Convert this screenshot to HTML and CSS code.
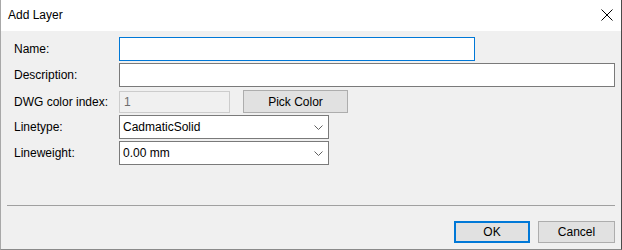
FILE: index.html
```html
<!DOCTYPE html>
<html lang="en">
<head>
    <meta charset="UTF-8">
    <title>Add Layer</title>
    <link rel="stylesheet" href="styles.css">
</head>
<body>

    <div class="window">
        <!-- Title bar -->
        <div class="titlebar">
            <span class="title">Add Layer</span>
            <svg class="close" width="12" height="12" viewBox="0 0 12 12">
                <path d="M0.5 0.5 L11.5 11.5 M11.5 0.5 L0.5 11.5" stroke="#000" stroke-width="1" fill="none"/>
            </svg>
        </div>

        <div class="content">
            <div class="form">
                <div class="row">
                    <label class="label">Name:</label>
                    <input class="field field-name focused" type="text">
                </div>
                <div class="row">
                    <label class="label">Description:</label>
                    <input class="field field-desc" type="text">
                </div>
                <div class="row row-color">
                    <label class="label">DWG color index:</label>
                    <input class="field field-index" type="text" value="1" disabled>
                    <button class="btn btn-pick">Pick Color</button>
                </div>
                <div class="row">
                    <label class="label">Linetype:</label>
                    <div class="combo">
                        <span>CadmaticSolid</span>
                        <svg class="chevron" width="9" height="5" viewBox="0 0 9 5">
                            <path d="M0.5 0.5 L4.5 4.5 L8.5 0.5" stroke="#606060" stroke-width="1" fill="none"/>
                        </svg>
                    </div>
                </div>
                <div class="row">
                    <label class="label">Lineweight:</label>
                    <div class="combo">
                        <span>0.00 mm</span>
                        <svg class="chevron" width="9" height="5" viewBox="0 0 9 5">
                            <path d="M0.5 0.5 L4.5 4.5 L8.5 0.5" stroke="#606060" stroke-width="1" fill="none"/>
                        </svg>
                    </div>
                </div>
            </div>

            <div class="separator"></div>

            <div class="buttons">
                <button class="btn btn-ok">OK</button>
                <button class="btn btn-cancel">Cancel</button>
            </div>
        </div>
    </div>

</body>
</html>
```

FILE: styles.css
```css
/* General Styling */
body {
    margin: 0;
    padding: 0;
    background: #3a3a3a;
    font-family: 'Liberation Sans', Arial, sans-serif;
    font-size: 12px;
    color: #000000;
}

.window {
    width: 620px;
    height: 249px;
    background: #f0f0f0;
    border-left: 1px solid #a8a8a8;
    border-right: 1px solid #4a4a4a;
    border-bottom: 1px solid #8a8a8a;
    display: flex;
    flex-direction: column;
}

/* Title bar */
.titlebar {
    height: 31px;
    background: #ffffff;
    display: flex;
    align-items: center;
    padding: 0 8px 0 7px;
    flex-shrink: 0;
}

.title {
    flex: 1;
    font-size: 12px;
    padding-bottom: 1px;
}

.close {
    margin-right: 0;
    margin-bottom: 1px;
}

/* Content */
.content {
    flex: 1;
    display: flex;
    flex-direction: column;
    padding: 6px 6px 0 13px;
}

.form {
    display: flex;
    flex-direction: column;
    gap: 2px;
}

.row {
    display: flex;
    align-items: center;
    height: 24px;
}

.row-color {
    height: 23px;
    margin: 1px 0 0;
}

.label {
    width: 105px;
    flex-shrink: 0;
}

.field {
    box-sizing: border-box;
    height: 24px;
    margin: 0;
    border: 1px solid #7a7a7a;
    background: #ffffff;
    font-family: inherit;
    font-size: 12px;
    padding: 0 4px;
    outline: none;
}

.field-name {
    width: 356px;
}

.field-name.focused {
    border-color: #0078d7;
}

.field-desc {
    width: 496px;
}

.field-index {
    width: 111px;
    height: 22px;
    border-color: #cccccc;
    background: #f0f0f0;
    color: #6d6d6d;
}

/* Combo boxes */
.combo {
    box-sizing: border-box;
    width: 210px;
    height: 24px;
    border: 1px solid #7a7a7a;
    background: #ffffff;
    display: flex;
    align-items: center;
    justify-content: space-between;
    padding: 0 5px 0 3px;
}

.chevron {
    margin-top: 1px;
}

/* Buttons */
.btn {
    box-sizing: border-box;
    font-family: inherit;
    font-size: 12px;
    color: #000000;
    background: #e1e1e1;
    border: 1px solid #adadad;
    padding: 0;
    margin: 0;
}

.btn-pick {
    width: 105px;
    height: 23px;
    margin-left: 13px;
}

.separator {
    height: 1px;
    background: #a0a0a0;
    margin: 40px 0 0 -7px;
}

.buttons {
    display: flex;
    justify-content: flex-end;
    gap: 8px;
    margin-top: 15px;
}

.btn-ok {
    width: 76px;
    height: 22px;
    border: 2px solid #0078d7;
}

.btn-cancel {
    width: 77px;
    height: 22px;
}
```
